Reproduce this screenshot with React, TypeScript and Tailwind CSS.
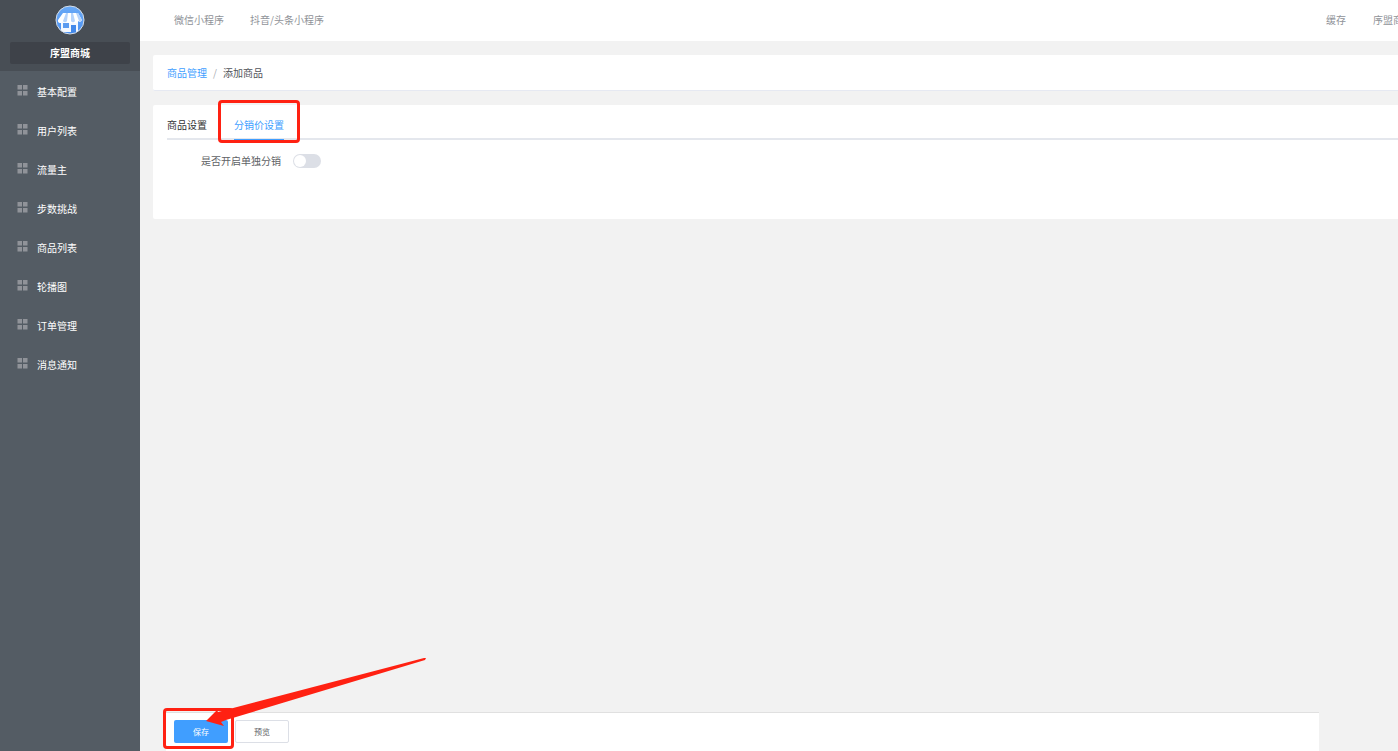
import { useState } from "react";

const menuItems = ["基本配置", "用户列表", "流量主", "步数挑战", "商品列表", "轮播图", "订单管理", "消息通知"];

const tabs = ["商品设置", "分销价设置"];

function ShopLogo() {
  return (
    <svg viewBox="0 0 30 30" className="size-[30px]" aria-hidden="true">
      <defs>
        <linearGradient id="sky" x1="0" y1="0" x2="0" y2="1">
          <stop offset="0" stopColor="#6aaaf7" />
          <stop offset="1" stopColor="#4b90f0" />
        </linearGradient>
        <clipPath id="disc">
          <circle cx="15" cy="15" r="14" />
        </clipPath>
      </defs>
      <circle cx="15" cy="15" r="14" fill="url(#sky)" />
      <g clipPath="url(#disc)">
        <path d="M6 15h17v12H6z" fill="#f4f8ff" />
        <path d="M8 8h15l4 7a2.4 2.4 0 0 1-4 1 2.4 2.4 0 0 1-5 0 2.4 2.4 0 0 1-5 0 2.4 2.4 0 0 1-5 0 2.4 2.4 0 0 1-5-1z" fill="#fff" />
        <path d="M11 8h2l-1 8a2.2 2.2 0 0 1-4 0zM16 8h2l2 8a2.2 2.2 0 0 1-4 0zM21 8h2l4 7a2.2 2.2 0 0 1-3 1z" fill="#b5d3fb" />
        <path d="M8 18h6v5H8z" fill="#5b9bf0" />
        <path d="M16 20h5v8h-5z" fill="#4389ea" />
      </g>
      <circle cx="15" cy="15" r="14" fill="none" stroke="#d5dde6" strokeWidth="1" />
    </svg>
  );
}

function GridIcon() {
  return (
    <svg viewBox="0 0 11 11" className="mb-0.5 size-[11px] shrink-0" fill="#909399" aria-hidden="true">
      <path d="M.5 0H5v4.5H.5zM6 0h4.5v4.5H6zM.5 6H5v4.5H.5zM6 6h4.5v4.5H6z" />
    </svg>
  );
}

function Sidebar() {
  return (
    <aside className="w-[140px] shrink-0 bg-[#545c64] text-white">
      <div className="flex h-[71px] flex-col items-center bg-[#484e55] px-2.5 pt-[5px]">
        <ShopLogo />
        <div className="mt-[7px] h-[22px] w-full rounded-xs bg-[#3e4249] text-center leading-[22px] font-bold">
          序盟商城
        </div>
      </div>
      <nav className="pt-px">
        {menuItems.map((item) => (
          <a key={item} href="#" className="flex h-[39px] items-center gap-[9px] pl-[17px]">
            <GridIcon />
            {item}
          </a>
        ))}
      </nav>
    </aside>
  );
}

function Header() {
  return (
    <header className="flex h-[41px] shrink-0 items-center justify-between bg-white pb-0.5 pl-[34px] text-[#909399]">
      <nav className="flex gap-[26px]">
        <a href="#">微信小程序</a>
        <a href="#">抖音/头条小程序</a>
      </nav>
      <div className="flex gap-[27px]">
        <button type="button">缓存</button>
        <button type="button">序盟商城</button>
      </div>
    </header>
  );
}

export default function App() {
  const [activeTab, setActiveTab] = useState("分销价设置");
  const [enabled, setEnabled] = useState(false);

  return (
    <div className="relative flex h-screen overflow-hidden bg-[#f2f2f2] font-['Noto_Sans_CJK_SC',sans-serif] text-[10px] leading-4">
      <Sidebar />

      {/* The page is slightly wider than the window, so its right edge is cut off */}
      <div className="-mr-[15px] flex min-w-0 flex-1 flex-col">
        <Header />

        <main className="flex flex-1 flex-col pt-3.5 pl-[13px]">
          <nav className="flex h-9 items-center gap-1.5 rounded-xs border-b border-[#e6e9f2] bg-white pl-3.5">
            <a href="#" className="text-[#409eff]">商品管理</a>
            <span className="text-[#a8abb2]">/</span>
            <span className="text-[#505359]">添加商品</span>
          </nav>

          <section className="mt-3.5 h-[114px] rounded-xs bg-white pl-3.5">
            <div role="tablist" className="flex h-[35px] gap-[27px] border-b-2 border-[#e4e7ed]">
              {tabs.map((tab) => (
                <button
                  key={tab}
                  type="button"
                  role="tab"
                  aria-selected={activeTab === tab}
                  onClick={() => setActiveTab(tab)}
                  className={
                    activeTab === tab
                      ? "relative -mb-0.5 border-b border-[#409eff] pt-1.5 text-[#409eff]"
                      : "pt-1.5 text-[#303133]"
                  }
                >
                  {tab}
                  {activeTab === tab && (
                    <span className="pointer-events-none absolute -inset-x-4 -top-[5px] -bottom-1 rounded-sm border-3 border-[#ff2112]" />
                  )}
                </button>
              ))}
            </div>
            <label className="mt-[13px] ml-[34px] flex w-fit items-center gap-3 text-[#606266]">
              是否开启单独分销
              <input
                type="checkbox"
                role="switch"
                checked={enabled}
                onChange={(e) => setEnabled(e.target.checked)}
                className="h-3.5 w-7 appearance-none rounded-full bg-[#dcdfe6] p-px before:block before:size-3 before:rounded-full before:bg-white checked:bg-[#409eff] checked:before:ml-auto"
              />
            </label>
          </section>

          <footer className="mt-auto mr-[94px] ml-[13px] flex h-[39px] gap-[7px] border-t border-[#e0e0e0] bg-white pt-[7px] pl-2 text-[8px]">
            <button type="button" className="relative h-[23px] w-[54px] rounded-xs bg-[#409eff] text-white">
              保存
              <span className="pointer-events-none absolute -top-3 -right-1.5 -bottom-1.5 -left-[11px] rounded-sm border-3 border-[#ff2112]" />
            </button>
            <button type="button" className="h-[23px] w-[54px] rounded-xs border border-[#dcdfe6] bg-white text-[#606266]">
              预览
            </button>
          </footer>
        </main>
      </div>

      {/* Pointer to the save button */}
      <svg viewBox="0 0 220 70" className="pointer-events-none absolute bottom-[24px] left-[206px] h-[70px] w-[220px]" fill="#ff2112" aria-hidden="true">
        <path d="M0 64 11 53 12 55 218 1 220 1 219 3 20 63 15 65 18 69z" />
      </svg>
    </div>
  );
}
